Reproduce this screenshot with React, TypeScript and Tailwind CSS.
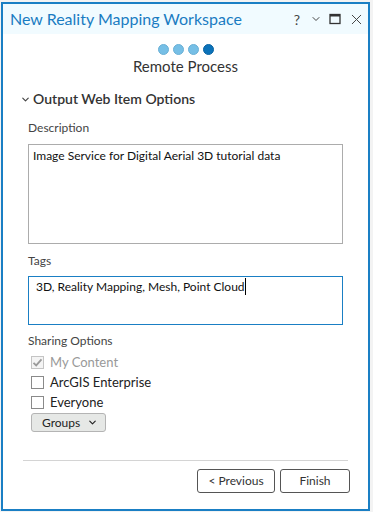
import { ChevronDown, X } from "lucide-react";

const font = { fontFamily: 'Lato, "Noto Sans", sans-serif' };

function Dots() {
  return (
    <div className="flex items-center gap-[4px] h-[11px]">
      <span className="h-[11px] w-[11px] rounded-full bg-[#76bfe6] border border-[#6ab0d6]" />
      <span className="h-[11px] w-[11px] rounded-full bg-[#76bfe6] border border-[#6ab0d6]" />
      <span className="h-[11px] w-[11px] rounded-full bg-[#76bfe6] border border-[#6ab0d6]" />
      <span className="h-[11px] w-[11px] rounded-full bg-[#0b72b9] border border-[#0a64a3]" />
    </div>
  );
}

function Check({ checked, disabled, label }: { checked?: boolean; disabled?: boolean; label: string }) {
  return (
    <div className="flex items-center gap-[6px] h-[20px]">
      <span
        className={`h-[13px] w-[13px] border flex items-center justify-center ${
          disabled ? "border-[#c4c4c4] bg-[#f4f4f4]" : "border-[#8a8a8a] bg-white"
        }`}
      >
        {checked && (
          <svg width="11" height="11" viewBox="0 0 11 11">
            <path d="M1.5 5.8 L4.2 8.4 L9.5 2.4" fill="none" stroke="#9a9a9a" strokeWidth="1.8" />
          </svg>
        )}
      </span>
      <span className={`text-[13px] leading-[16px] ${disabled ? "text-[#999]" : "text-[#222]"}`}>{label}</span>
    </div>
  );
}

export default function App() {
  return (
    <div className="w-[373px] h-[512px] bg-[#f3f3f3] pt-[2px]" style={font}>
      <div className="w-[369px] h-[509px] ml-[1px] border-[2px] border-[#1a7fc4] bg-white flex flex-col">
        <div className="h-[30px] bg-[#f1fbff] flex items-center pl-[7px] pr-[3px]">
          <span className="text-[16px] leading-[20px] text-[#1a7cc2] flex-1">New Reality Mapping Workspace</span>
          <div className="flex items-center gap-[7px] text-[#444]">
            <span className="text-[14px] w-[12px] text-center">?</span>
            <ChevronDown size={12} strokeWidth={2} />
            <svg width="12" height="12" viewBox="0 0 12 12">
              <rect x="1" y="1.5" width="10" height="9" fill="none" stroke="#333" strokeWidth="1.3" />
              <rect x="1" y="1.5" width="10" height="2" fill="#333" />
            </svg>
            <X size={17} strokeWidth={1.4} />
          </div>
        </div>

        <div className="flex flex-col items-center mt-[10px]">
          <Dots />
          <div className="text-[15px] leading-[18px] text-[#333] mt-[2px]">Remote Process</div>
        </div>

        <div className="flex items-center mt-[16px] pl-[17px] gap-[2px]">
          <ChevronDown size={11} strokeWidth={2.5} className="text-[#444]" />
          <span className="text-[14px] leading-[16px] font-semibold text-[#333]">Output Web Item Options</span>
        </div>

        <div className="px-[25px] mt-[13px] flex flex-col">
          <div className="text-[12px] leading-[16px] text-[#444]">Description</div>
          <div className="mt-[8px] h-[100px] border border-[#acacac] px-[4px] pt-[3px] text-[12px] leading-[16px] text-[#111]">
            Image Service for Digital Aerial 3D tutorial data
          </div>

          <div className="text-[12px] leading-[16px] text-[#444] mt-[9px]">Tags</div>
          <div className="mt-[7px] h-[49px] border border-[#1a7fc4] pl-[7px] pt-[2px] text-[12px] leading-[16px] text-[#111] flex items-start">
            <span>3D, Reality Mapping, Mesh, Point Cloud</span>
            <span className="inline-block w-[1px] h-[17px] bg-black -mt-[1px]" />
          </div>

          <div className="text-[12px] leading-[16px] text-[#444] mt-[8px]">Sharing Options</div>
          <div className="pl-[3px] flex flex-col mt-[3px]">
            <Check checked disabled label="My Content" />
            <Check label="ArcGIS Enterprise" />
            <Check label="Everyone" />
            <div className="mt-[1px] w-[75px] h-[19px] rounded-[3px] border border-[#b4b4b4] bg-[#e6e8e6] flex items-center justify-between pl-[10px] pr-[7px] text-[12px] leading-[16px] text-[#222]">
              <span>Groups</span>
              <ChevronDown size={11} strokeWidth={2.5} />
            </div>
          </div>
        </div>

        <div className="mx-[20px] mt-[28px] h-px bg-[#d4d4d4]" />

        <div className="flex justify-end gap-[5px] pr-[18px] mt-[8px]">
          <button className="w-[78px] h-[24px] border border-[#555] rounded-[3px] text-[12px] leading-[16px] text-[#333]">
            &lt; Previous
          </button>
          <button className="w-[70px] h-[24px] border border-[#555] rounded-[3px] text-[12px] leading-[16px] text-[#333]">
            Finish
          </button>
        </div>
      </div>
    </div>
  );
}
